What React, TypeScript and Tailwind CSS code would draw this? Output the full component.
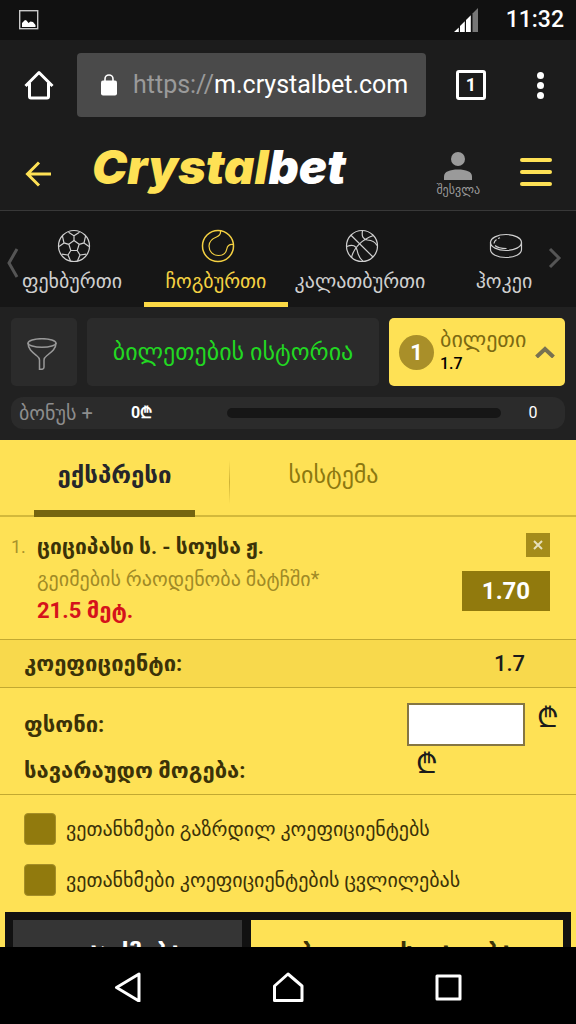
import { useState } from 'react'
import type { ReactNode } from 'react'

interface Sport {
  id: string
  name: string
  icon: ReactNode
}

const sports: Sport[] = [
  {
    id: 'football',
    name: 'ფეხბურთი',
    icon: (
      <>
        <circle cx="17" cy="17" r="15.5" />
        <path d="M17 11.5l5.2 3.8-2 6.2h-6.4l-2-6.2z" />
        <path d="M17 11.5V6.8l-5.5-3.6M17 6.8l5.5-3.6M22.2 15.3l4.8-1.4 1.6-7M27 13.9l5 3.6M20.2 21.5l2.8 4.5-2.5 5.8M23 26l6.3-.8M13.8 21.5L11 26l2.5 5.8M11 26l-6.3-.8M11.8 15.3L7 13.9l-1.6-7M7 13.9l-5 3.6" />
      </>
    ),
  },
  {
    id: 'tennis',
    name: 'ჩოგბურთი',
    icon: (
      <>
        <circle cx="17" cy="17" r="15.5" strokeWidth="1.5" />
        <path d="M19.5 1.8c.5 3.500-1 5-4 6.200-4.500 1.800-7.500 4.500-7.500 9 0 5.500 4 9.500 9.500 9.500 4.500 0 7.500-2.500 8.300-6.500.7-3.500 2.500-5 6.500-4.500" />
      </>
    ),
  },
  {
    id: 'basketball',
    name: 'კალათბურთი',
    icon: (
      <>
        <circle cx="17" cy="17" r="15.5" />
        <path d="M6 6.200L28 28M28.500 6.500C18 10 9 18 6.500 28.500M17.500 1.500c-1 6 .5 9 5 9.500 4.500.3 7.500 1.500 9.500 5.500M1.700 17.500c6-2.500 9.500-1 10.500 4 .8 4.500 2.300 8 6 11" />
      </>
    ),
  },
  {
    id: 'hockey',
    name: 'ჰოკეი',
    icon: (
      <>
        <ellipse cx="17" cy="13.500" rx="15.500" ry="8" />
        <path d="M1.500 13.500v7c0 4.500 7 8 15.500 8s15.500-3.500 15.500-8v-7M5 14.500c0-1.500.8-2.800 2.500-4M9 9.500l2-.8M6 16.500c2.500 2.200 6 3 11.500 3" />
      </>
    ),
  },
]

const betTypes = [
  { id: 'express', name: 'ექსპრესი' },
  { id: 'system', name: 'სისტემა' },
]

function StatusBar() {
  return (
    <div className="flex h-10 shrink-0 items-center justify-between bg-[#111111] px-3">
      <svg className="ml-1 size-7" viewBox="0 0 28 28" aria-hidden="true">
        <rect x="3.700" y="4.700" width="18" height="18" fill="none" stroke="#c9c9c9" strokeWidth="1.400" />
        <path d="M6 21v-4l3-3 1.500.5 2 2.500 2-1.500 2.500.5 2.500 3v2z" fill="#fff" />
      </svg>
      <div className="flex items-center gap-7">
        <svg className="h-6 w-6" viewBox="0 0 24 24" aria-hidden="true">
          <path d="M0 24L4.800 19.500V24zM6 18l4.800-4.800V24H6zM12 12l4.800-4.800V24H12z" fill="#fff" />
          <path d="M18.500 5.500L24 0v24h-5.500z" fill="#777" />
        </svg>
        <span className="text-[23px] font-medium text-white">11:32</span>
      </div>
    </div>
  )
}

function BrowserBar() {
  return (
    <div className="flex h-[90px] shrink-0 items-center bg-[#1c1c1c] pr-6">
      <button aria-label="Home" className="flex w-[77px] justify-center">
        <svg className="h-8 w-8" viewBox="0 0 32 32" fill="none" stroke="#fff" strokeWidth="3" strokeLinejoin="round" aria-hidden="true">
          <path d="M2.500 17L16 3.500 29.500 17M6.500 14V27.500a1.500 1.500 0 0 0 1.500 1.500h16a1.500 1.500 0 0 0 1.500-1.500V14" />
        </svg>
      </button>
      <div className="flex h-16 flex-1 items-center gap-4 rounded-sm bg-[#4a4a4a] pl-6">
        <svg className="h-[22px] w-4" viewBox="0 0 16 22" aria-hidden="true">
          <rect x="0" y="6.500" width="16" height="15" rx="2" fill="#fff" />
          <path d="M4 7V5a4 4 0 0 1 8 0v2" fill="none" stroke="#fff" strokeWidth="1.600" />
        </svg>
        <span className="text-[25px] whitespace-nowrap text-white">
          <span className="text-[#9a9a9a]">https://</span>m.crystalbet.com
        </span>
      </div>
      <button aria-label="Tabs" className="ml-[30px] flex size-[30px] items-center justify-center rounded-[3px] border-3 border-white text-lg font-bold text-white">
        1
      </button>
      <button aria-label="Menu" className="ml-[42px] flex w-6 flex-col items-center gap-[3px]">
        <span className="size-[7px] rounded-full bg-white" />
        <span className="size-[7px] rounded-full bg-white" />
        <span className="size-[7px] rounded-full bg-white" />
      </button>
    </div>
  )
}

function SiteHeader() {
  return (
    <header className="flex h-[81px] shrink-0 items-center border-b border-[#383838] bg-[#1c1c1c] px-6">
      <button aria-label="Back" className="mt-2">
        <svg className="h-7 w-7" viewBox="0 0 28 28" fill="none" stroke="#fee155" strokeWidth="3" aria-hidden="true">
          <path d="M27 14H4M15 2.500L3.500 14 15 25.500" />
        </svg>
      </button>
      <a href="#" className="ml-10 pb-2 font-['Inter',sans-serif] text-[47px] leading-none font-black text-white italic">
        <span className="text-[#fee155]">Crystal</span>bet
      </a>
      <button className="mt-3 ml-auto flex flex-col items-center text-[#9a9a9a]">
        <svg className="h-7 w-7" viewBox="0 0 28 28" fill="currentColor" aria-hidden="true">
          <circle cx="14" cy="7" r="7" />
          <path d="M0 28v-3.500C0 19.500 6 17.500 14 17.500s14 2 14 7V28z" />
        </svg>
        <span className="text-xs leading-5">შესვლა</span>
      </button>
      <button aria-label="მენიუ" className="mt-1 ml-10 flex w-8 flex-col gap-2">
        <span className="h-1 rounded-full bg-[#fee155]" />
        <span className="h-1 rounded-full bg-[#fee155]" />
        <span className="h-1 rounded-full bg-[#fee155]" />
      </button>
    </header>
  )
}

function SportsNav() {
  const [active, setActive] = useState('tennis')

  return (
    <nav className="relative flex h-24 shrink-0 bg-[#161616]">
      {sports.map((sport) => (
        <button
          key={sport.id}
          onClick={() => setActive(sport.id)}
          className={`flex min-w-0 flex-1 flex-col items-center border-b-5 pt-[18px] ${
            active === sport.id ? 'border-[#fcd945] text-[#f5d142]' : 'border-transparent text-[#cfcfcf]'
          }`}
        >
          <svg className="ml-1 h-[34px] w-[34px]" viewBox="0 0 34 34" fill="none" stroke="currentColor" strokeWidth="1.200" aria-hidden="true">
            {sport.icon}
          </svg>
          <span className="mt-1 text-xl leading-7">{sport.name}</span>
        </button>
      ))}
      <button aria-label="წინა" className="absolute top-9 left-1">
        <svg className="h-8 w-4" viewBox="0 0 16 32" fill="none" stroke="#555" strokeWidth="3" aria-hidden="true">
          <path d="M13 2L5 16l8 14" />
        </svg>
      </button>
      <button aria-label="შემდეგი" className="absolute top-9 right-3">
        <svg className="h-6 w-4" viewBox="0 0 16 24" fill="none" stroke="#555" strokeWidth="3" aria-hidden="true">
          <path d="M2 2l9 9-9 9" />
        </svg>
      </button>
    </nav>
  )
}

function TicketBar() {
  return (
    <section className="shrink-0 bg-[#212121] px-[11px] py-[11px]">
      <div className="flex h-[68px] gap-[10px]">
        <button aria-label="ფილტრი" className="flex w-[66px] items-center justify-center rounded-[5px] bg-[#2b2b2b]">
          <svg className="mt-1 mr-1 h-8 w-[30px]" viewBox="0 0 30 32" fill="none" stroke="#999" strokeWidth="1.500" aria-hidden="true">
            <ellipse cx="15" cy="5" rx="14" ry="4.300" />
            <path d="M1 5c0 6 4 9 8.500 12.500C11.500 19 12.500 20 12.500 22v9.300h2c1.800 0 2.500-.8 2.500-2V22c0-2 1-3 3-4.500C24.500 14 29 11 29 5" />
          </svg>
        </button>
        <button className="flex-1 rounded-[5px] bg-[#2b2b2b] text-2xl text-[#22d822]">ბილეთების ისტორია</button>
        <button className="flex w-44 items-center rounded-[5px] bg-[#fee155] px-[10px]">
          <span className="flex size-[35px] shrink-0 items-center justify-center rounded-full bg-[#a98f29] text-[22px] font-bold text-white">1</span>
          <span className="ml-[6px] flex flex-col items-start">
            <span className="text-[22px] leading-6 text-[#7c6a12]">ბილეთი</span>
            <span className="text-base leading-6 font-medium text-black">1.7</span>
          </span>
          <svg className="ml-auto h-3 w-5" viewBox="0 0 20 12" fill="none" stroke="#777151" strokeWidth="4" aria-hidden="true">
            <path d="M1.500 11L10 3l8.500 8" />
          </svg>
        </button>
      </div>
      <div className="mt-[11px] flex h-8 items-center rounded-xl bg-[#2b2b2b] px-2 text-base">
        <span className="w-28 text-xl text-[#8d8d8d]">ბონუს +</span>
        <span className="w-24 font-bold text-white">0₾</span>
        <div className="h-[10px] flex-1 rounded-full bg-[#161616]" />
        <span className="w-14 pl-2 text-center text-white">0</span>
      </div>
    </section>
  )
}

function BetSlip() {
  const [betType, setBetType] = useState('express')
  const [stake, setStake] = useState('')

  return (
    <main className="min-h-0 flex-1 overflow-hidden bg-[#fee155] text-[#3b3208]">
      <div className="flex h-[77px] border-b-2 border-[#d3b93b] pl-[34px]">
        <button
          onClick={() => setBetType(betTypes[0].id)}
          className={`-mb-[2px] w-[161px] border-b-[7px] text-2xl ${
            betType === 'express' ? 'border-[#75650f] font-bold text-[#26262b]' : 'border-transparent text-[#8c7810]'
          }`}
        >
          {betTypes[0].name}
        </button>
        <span className="mt-5 ml-[34px] h-11 w-px bg-linear-to-b from-transparent via-[#cdb134] to-transparent" />
        <button
          onClick={() => setBetType(betTypes[1].id)}
          className={`-mb-[2px] ml-[23px] w-[161px] border-b-[7px] text-2xl ${
            betType === 'system' ? 'border-[#75650f] font-bold text-[#26262b]' : 'border-transparent text-[#8c7810]'
          }`}
        >
          {betTypes[1].name}
        </button>
      </div>

      <div className="flex h-[123px] items-start border-b border-[#c2a931] pt-[14px] pr-[26px] pl-[11px]">
        <span className="w-[26px] text-lg leading-8 text-[#a8922c]">1.</span>
        <div className="flex-1">
          <h2 className="text-[21px] leading-8 font-bold">ციციპასი ს. - სოუსა ჟ.</h2>
          <p className="text-xl leading-8 text-[#a08a26]">გეიმების რაოდენობა მატჩში*</p>
          <p className="text-[22px] leading-8 font-bold text-[#d5131b]">21.5 მეტ.</p>
        </div>
        <div className="mt-[2px] flex flex-col items-end gap-[14px]">
          <button aria-label="წაშლა" className="flex size-6 items-center justify-center bg-[#a58c1a]">
            <svg className="size-[10px]" viewBox="0 0 10 10" stroke="#e6dfba" strokeWidth="2" aria-hidden="true">
              <path d="M1 1l8 8M9 1L1 9" />
            </svg>
          </button>
          <span className="flex h-10 w-22 items-center justify-center bg-[#917a0d] text-2xl font-bold text-white">1.70</span>
        </div>
      </div>

      <div className="flex h-12 items-center justify-between border-b border-[#c2a931] bg-[#f8d94c] pr-[51px] pl-6">
        <span className="text-[22px] font-bold">კოეფიციენტი:</span>
        <span className="text-[22px] font-medium text-[#1b1b1b]">1.7</span>
      </div>

      <div className="h-[107px] border-b border-[#c2a931] pt-[14px] pl-6">
        <div className="flex h-11 items-center">
          <label htmlFor="stake" className="flex-1 text-[22px] font-bold">ფსონი:</label>
          <input
            id="stake"
            inputMode="decimal"
            value={stake}
            onChange={(e) => setStake(e.target.value)}
            className="h-[43px] w-[118px] border-2 border-[#857643] bg-white px-2 text-lg outline-none"
          />
          <span className="w-[51px] pb-3 pl-3 text-[28px] font-medium text-[#1b1b1b]">₾</span>
        </div>
        <div className="flex h-12 items-center">
          <span className="flex-1 text-[22px] font-bold">სავარაუდო მოგება:</span>
          <span className="w-40 pb-3 text-[28px] font-medium text-[#1b1b1b]">₾</span>
        </div>
      </div>

      <div className="flex flex-col gap-[19px] pt-[18px] pl-6">
        <label className="flex h-8 items-center gap-[10px] text-xl">
          <input type="checkbox" className="size-8 appearance-none rounded-sm border border-[#a58e26] bg-[#917a0d] checked:bg-[#5e4f06]" />
          ვეთანხმები გაზრდილ კოეფიციენტებს
        </label>
        <label className="flex h-8 items-center gap-[10px] text-xl">
          <input type="checkbox" className="size-8 appearance-none rounded-sm border border-[#a58e26] bg-[#917a0d] checked:bg-[#5e4f06]" />
          ვეთანხმები კოეფიციენტების ცვლილებას
        </label>
      </div>

      <div className="mx-[5px] mt-4 flex gap-[9px] bg-[#111111] p-2 text-2xl font-bold">
        <button className="h-16 w-[229px] bg-[#353535] text-white">გაუქმება</button>
        <button className="h-16 flex-1 bg-[#fee155] text-[#3b3208]">ბილეთის დადება</button>
      </div>
    </main>
  )
}

function SystemNav() {
  return (
    <div className="flex h-[77px] shrink-0 items-center justify-center gap-32 bg-black">
      <button aria-label="Back">
        <svg className="h-8 w-8" viewBox="0 0 32 32" fill="none" stroke="#fff" strokeWidth="3" strokeLinejoin="round" aria-hidden="true">
          <path d="M27 4v27L4.500 17.500z" />
        </svg>
      </button>
      <button aria-label="Home">
        <svg className="h-8 w-8" viewBox="0 0 32 32" fill="none" stroke="#fff" strokeWidth="3" strokeLinejoin="round" aria-hidden="true">
          <path d="M2.500 30.500V16L16 4l14 12v14.500z" />
        </svg>
      </button>
      <button aria-label="Recent">
        <svg className="h-8 w-8" viewBox="0 0 32 32" fill="none" stroke="#fff" strokeWidth="3" strokeLinejoin="round" aria-hidden="true">
          <rect x="5" y="6" width="23" height="23" />
        </svg>
      </button>
    </div>
  )
}

export default function App() {
  return (
    <div className="flex h-screen flex-col overflow-hidden bg-black font-['Roboto','Open_Sans','DejaVu_Sans',sans-serif]">
      <StatusBar />
      <BrowserBar />
      <SiteHeader />
      <SportsNav />
      <TicketBar />
      <BetSlip />
      <SystemNav />
    </div>
  )
}
